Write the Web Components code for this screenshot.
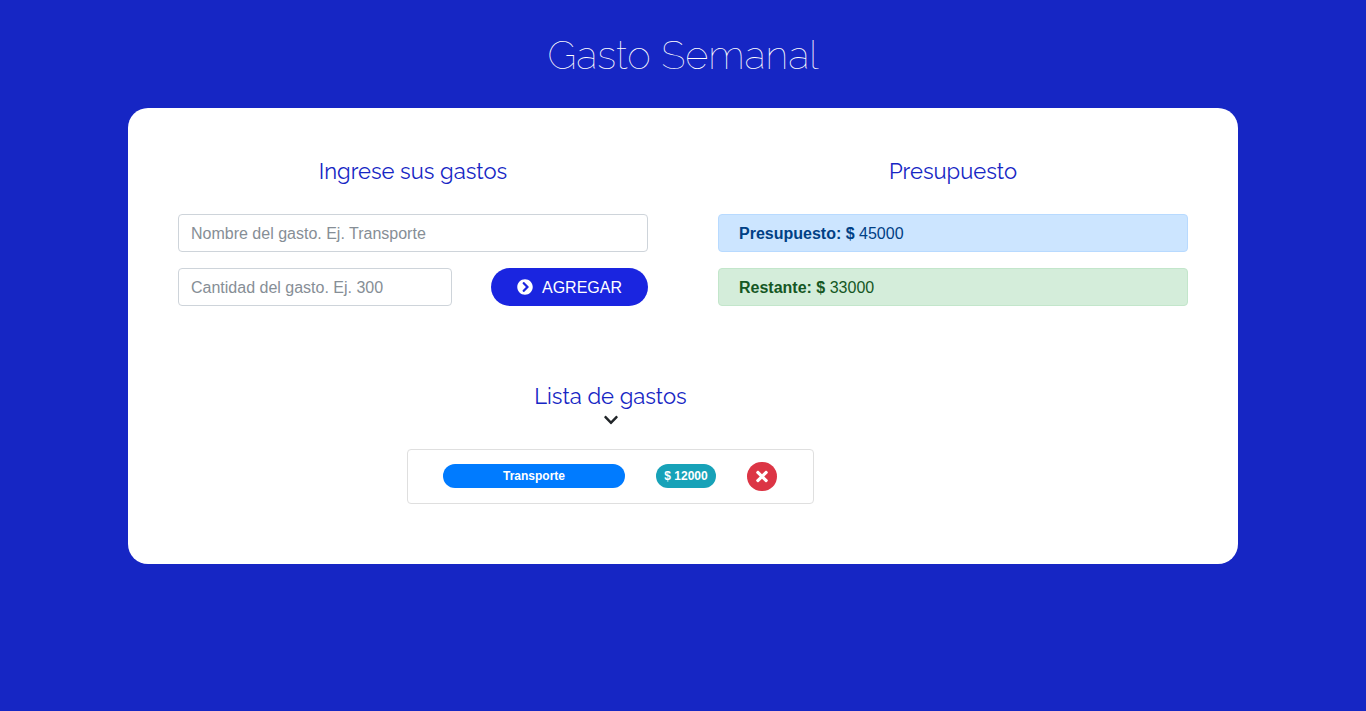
<!DOCTYPE html>
<html lang="es">
<head>
<meta charset="utf-8">
<meta name="viewport" content="width=device-width, initial-scale=1">
<title>Gasto Semanal</title>
<style>
  html, body { margin: 0; }
  body {
    --brand: #1626c4;
    --title-font: Raleway, Lato, sans-serif;
    background: var(--brand);
    color: #212529;
    font: 16px/24px "Liberation Sans", Arial, sans-serif;
  }
</style>
</head>
<body>
<expense-app></expense-app>
<script>
const icons = {
  go: ['0 0 512 512', 'M256 8c137 0 248 111 248 248S393 504 256 504 8 393 8 256 119 8 256 8zm113.9 231L234.4 103.5c-9.4-9.4-24.6-9.4-33.9 0l-17 17c-9.4 9.4-9.4 24.6 0 33.9L285.1 256 183.5 357.6c-9.4 9.4-9.4 24.6 0 33.9l17 17c9.4 9.4 24.6 9.4 33.9 0L369.9 273c9.4-9.4 9.4-24.6 0-34z'],
  down: ['0 0 448 512', 'M207.029 381.476L12.686 187.132c-9.373-9.373-9.373-24.569 0-33.941l22.667-22.667c9.357-9.357 24.522-9.375 33.901-.04L224 284.505l154.745-154.021c9.379-9.335 24.544-9.317 33.901.04l22.667 22.667c9.373 9.373 9.373 24.569 0 33.941L240.971 381.476c-9.373 9.372-24.569 9.372-33.942 0z'],
  times: ['0 0 352 512', 'M242.72 256l100.07-100.07c12.28-12.28 12.28-32.19 0-44.48l-22.24-22.24c-12.28-12.28-32.19-12.28-44.48 0L176 189.28 75.93 89.21c-12.28-12.28-32.19-12.28-44.48 0L9.21 111.45c-12.28 12.28-12.28 32.19 0 44.48L109.28 256 9.21 356.07c-12.28 12.28-12.28 32.19 0 44.48l22.24 22.24c12.28 12.28 32.2 12.28 44.48 0L176 322.72l100.07 100.07c12.28 12.28 32.2 12.28 44.48 0l22.24-22.24c12.28-12.28 12.28-32.19 0-44.48L242.72 256z']
};

function define(name, render) {
  customElements.define(name, class extends HTMLElement {
    connectedCallback() {
      if (this.shadowRoot) return;
      this.attachShadow({ mode: 'open' }).innerHTML =
        '<style>*{box-sizing:border-box}:host([hidden]){display:none}</style>' + render(this);
    }
  });
}

define('app-icon', el => {
  const [box, path] = icons[el.getAttribute('name')];
  return `<style>
      :host { display: inline-flex; }
      svg { display: block; height: 16px; fill: currentColor; }
      :host([name="times"]) svg { width: 12px; height: 17px; }
    </style>
    <svg viewBox="${box}" aria-hidden="true"><path d="${path}"/></svg>`;
});

define('section-title', () => `
  <style>
    :host { display: block; text-align: center; }
    h2 { margin: 0; color: var(--brand); font: 400 22px/26px var(--title-font); }
  </style>
  <h2><slot></slot></h2>`);

define('expense-form', () => `
  <style>
    :host { display: block; }
    form { display: grid; gap: 16px; margin: 0; }
    .row { display: flex; justify-content: space-between; gap: 16px; }
    input {
      width: 100%; height: 38px; padding: 7px 12px 5px; font: inherit; color: #495057;
      background: #fff; border: 1px solid #ced4da; border-radius: 4px;
    }
    .row input { flex: 0 1 274px; min-width: 0; }
    input::placeholder { color: #868e96; opacity: 1; }
    button {
      display: flex; align-items: center; justify-content: center; gap: 9px;
      height: 38px; padding: 0 26px; border: 0; border-radius: 20px;
      background: #1a25e0; color: #fff; font: inherit; cursor: pointer;
    }
    button span { padding-top: 2px; }
  </style>
  <form>
    <input type="text" aria-label="Nombre del gasto" placeholder="Nombre del gasto. Ej. Transporte">
    <div class="row">
      <input type="text" inputmode="numeric" aria-label="Cantidad del gasto" placeholder="Cantidad del gasto. Ej. 300">
      <button type="button"><app-icon name="go"></app-icon><span>AGREGAR</span></button>
    </div>
  </form>`);

define('amount-alert', el => `
  <style>
    :host {
      display: block; box-sizing: border-box; padding: 7px 20px 5px; border: 1px solid #b8daff;
      border-radius: 4px; background: #cce5ff; color: #004085;
    }
    :host([kind="left"]) { border-color: #c3e6cb; background: #d4edda; color: #155724; }
  </style>
  <strong>${el.getAttribute('label')}: $</strong> <slot></slot>`);

define('expense-item', el => `
  <style>
    :host {
      display: flex; align-items: center; justify-content: space-between; gap: 16px;
      box-sizing: border-box; height: 55px; padding: 0 36px 1px 35px;
      border: 1px solid #dfdfdf; border-radius: 4px; background: #fff;
    }
    span {
      height: 24px; border-radius: 12px; padding: 0 8px; color: #fff;
      font-size: 12px; font-weight: 700; text-align: center; white-space: nowrap;
    }
    .name { flex: 0 1 182px; background: #007bff; }
    .cost { background: #17a2b8; }
    button {
      display: flex; align-items: center; justify-content: center;
      width: 30px; height: 29px; padding: 0; border: 0; border-radius: 15px;
      background: #dc3545; color: #fff; cursor: pointer;
    }
  </style>
  <span class="name"><slot></slot></span>
  <span class="cost">$ ${el.getAttribute('cost')}</span>
  <button type="button" aria-label="Eliminar gasto"><app-icon name="times"></app-icon></button>`);

define('expense-app', () => `
  <style>
    :host { display: block; min-height: 100vh; box-sizing: border-box; padding: 30px 16px; }
    h1 { margin: 0 0 28px; text-align: center; color: #fff; font: 100 40px/50px var(--title-font); }
    main { max-width: 1110px; margin: 0 auto; padding: 50px 50px 60px; border-radius: 20px; background: #fff; }
    .columns { display: grid; grid-template-columns: 1fr 1fr; gap: 70px; }
    section-title { margin-bottom: 30px; }
    .stack { display: grid; gap: 16px; }
    .list { display: grid; grid-template-columns: 229fr 407fr 374fr; margin-top: 77px; }
    .list section { grid-column: 2; text-align: center; }
    .list section-title { margin-bottom: 3px; }
    .list app-icon { display: flex; justify-content: center; margin-bottom: 21px; }
  </style>
  <h1>Gasto Semanal</h1>
  <main>
    <div class="columns">
      <section>
        <section-title>Ingrese sus gastos</section-title>
        <expense-form></expense-form>
      </section>
      <section>
        <section-title>Presupuesto</section-title>
        <div class="stack">
          <amount-alert label="Presupuesto">45000</amount-alert>
          <amount-alert kind="left" label="Restante">33000</amount-alert>
        </div>
      </section>
    </div>
    <div class="list">
      <section>
        <section-title>Lista de gastos</section-title>
        <app-icon name="down"></app-icon>
        <expense-item cost="12000">Transporte</expense-item>
      </section>
    </div>
  </main>`);
</script>
</body>
</html>
